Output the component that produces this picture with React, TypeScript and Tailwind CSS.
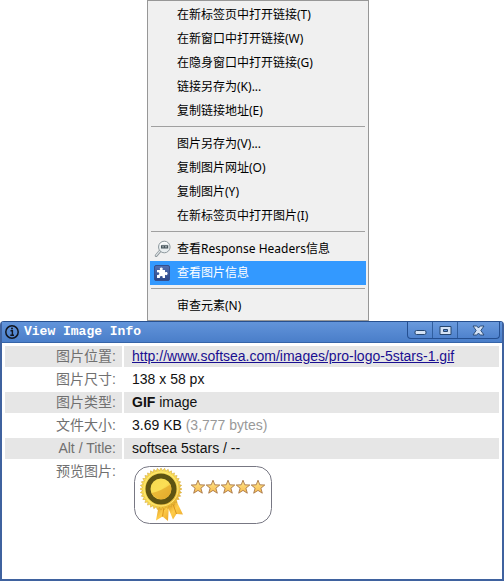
import type { ReactNode } from "react";
import clsx from "clsx";

type MenuEntry = { label: string; icon?: ReactNode; active?: boolean };

const MagnifierIcon = () => (
  <svg width="18" height="18" viewBox="0 0 18 18" aria-hidden="true">
    <path d="M6.4 10.6 2.2 15.6" stroke="#8d969b" strokeWidth="2.8" strokeLinecap="round" />
    <path d="M6.2 10.6 2.2 15.3" stroke="#dfe5e7" strokeWidth="1.2" strokeLinecap="round" />
    <circle cx="10.3" cy="7" r="5.8" fill="#e9eef0" stroke="#8f9a9f" strokeWidth="1" />
    <path d="M6.2 5.2C7.4 2.8 10.6 1.8 13.2 3.4" stroke="#fff" strokeWidth="1.2" fill="none" />
    <path d="M7.6 8.6V5.8H13.6V7.8H7.8M10.4 5.8V7.8" stroke="#47555c" strokeWidth="1.2" fill="none" />
  </svg>
);

const PuzzleIcon = () => (
  <svg width="16" height="16" viewBox="0 0 16 16" aria-hidden="true">
    <defs>
      <linearGradient id="puzzle" x2="0" y2="1">
        <stop stopColor="#5371b4" />
        <stop offset="1" stopColor="#2b4687" />
      </linearGradient>
    </defs>
    <rect x=".5" y=".5" width="15" height="15" rx="1.5" fill="url(#puzzle)" stroke="#34508f" />
    <path
      d="M3 5H6.2C5.3 3.6 6 2.5 7.3 2.5S9.3 3.6 8.4 5H11V7.5C12.4 6.6 13.6 7.2 13.6 8.6S12.4 10.6 11 9.7V13H8.5C9.2 11.7 8.5 10.9 7.3 10.9S5.4 11.7 6.1 13H3V9.8C4.4 10.5 5.3 9.8 5.3 8.6S4.4 6.8 3 7.5Z"
      fill="#fff"
    />
  </svg>
);

const groups: MenuEntry[][] = [
  [
    { label: "在新标签页中打开链接(T)" },
    { label: "在新窗口中打开链接(W)" },
    { label: "在隐身窗口中打开链接(G)" },
    { label: "链接另存为(K)..." },
    { label: "复制链接地址(E)" },
  ],
  [
    { label: "图片另存为(V)..." },
    { label: "复制图片网址(O)" },
    { label: "复制图片(Y)" },
    { label: "在新标签页中打开图片(I)" },
  ],
  [
    { label: "查看Response Headers信息", icon: <MagnifierIcon /> },
    { label: "查看图片信息", icon: <PuzzleIcon />, active: true },
  ],
  [{ label: "审查元素(N)" }],
];

const ContextMenu = () => (
  <nav className="w-[222px] border border-[#979797] bg-[#f0f0f0] p-0.5 text-xs text-black font-['Noto_Sans','Noto_Sans_CJK_SC',sans-serif]">
    {groups.map((items, i) => (
      <div key={i}>
        {i > 0 && <hr className="mx-px mt-[3px] mb-[5px] border-[#a0a0a0]" />}
        <ul>
          {items.map(({ label, icon, active }) => (
            <li key={label}>
              <button
                type="button"
                className={clsx(
                  "flex h-6 w-full items-center whitespace-nowrap text-left",
                  active && "bg-[#3399ff] text-white"
                )}
              >
                <span className="flex w-[27px] shrink-0 pl-1">{icon}</span>
                {label}
              </button>
            </li>
          ))}
        </ul>
      </div>
    ))}
  </nav>
);

// toothed edge of the medal, 36 teeth
const medalEdge = Array.from({ length: 72 }, (_, i) => {
  const r = i % 2 ? 18.4 : 21;
  const a = (i * Math.PI) / 36;
  return `${27 + r * Math.cos(a)},${23 + r * Math.sin(a)}`;
}).join(" ");

const Preview = () => (
  <svg width="138" height="58" viewBox="0 0 138 58" role="img" aria-label="softsea 5stars">
    <defs>
      <linearGradient id="gold" x1="0" y1="0" x2="1" y2="1">
        <stop stopColor="#f5d84e" />
        <stop offset=".5" stopColor="#fbdf55" />
        <stop offset="1" stopColor="#e0a020" />
      </linearGradient>
      <linearGradient id="ribbon" x2="1" y2="1">
        <stop stopColor="#d08a14" />
        <stop offset=".5" stopColor="#ffcd4a" />
        <stop offset="1" stopColor="#eaa52a" />
      </linearGradient>
      <linearGradient id="star" x2="0" y2="1">
        <stop stopColor="#ffe890" />
        <stop offset="1" stopColor="#f8bb4c" />
      </linearGradient>
    </defs>
    <rect x=".5" y=".5" width="137" height="57" rx="15" fill="#fff" stroke="#777783" />
    <path d="M25 38 22 54.5 28.5 50.5 34 55 35 38Z" fill="url(#ribbon)" />
    <path d="M33 39 39 53.5 42.5 48 49 48.5 42 34Z" fill="url(#ribbon)" />
    <path d="M30 41 28.5 50.5M39 38 42.5 48" stroke="#d9951c" />
    <polygon points={medalEdge} fill="url(#gold)" stroke="#d0a02c" strokeWidth=".5" />
    <circle cx="27" cy="23" r="17" fill="none" stroke="#ffe878" strokeWidth="1" />
    <circle cx="27" cy="23" r="13" fill="url(#gold)" stroke="#5e5312" strokeWidth="5" />
    <path d="M17.5 27C24 26 31 22 36.5 18.5A10.3 10.3 0 0 1 17.5 27Z" fill="#e3a82a" opacity=".7" />
    {[64, 79, 94, 109, 124].map((x) => (
      <path
        key={x}
        transform={`translate(${x} 21)`}
        d="M0-6.8 1.8-2.2 6.8-2 2.9 1.2 4.3 6.2 0 3.4-4.3 6.2-2.9 1.2-6.8-2-1.8-2.2Z"
        fill="url(#star)"
        stroke="#a8774a"
        strokeWidth=".9"
      />
    ))}
  </svg>
);

const rows: { label: string; value: ReactNode }[] = [
  {
    label: "图片位置:",
    value: (
      <a href="#image" className="text-[#1a0f91] underline">
        http://www.softsea.com/images/pro-logo-5stars-1.gif
      </a>
    ),
  },
  { label: "图片尺寸:", value: "138 x 58 px" },
  {
    label: "图片类型:",
    value: (
      <>
        <b>GIF</b> image
      </>
    ),
  },
  {
    label: "文件大小:",
    value: (
      <>
        3.69 KB <span className="text-[#999]">(3,777 bytes)</span>
      </>
    ),
  },
  { label: "Alt / Title:", value: "softsea 5stars / --" },
];

const WindowButtons = () => (
  <div className="flex h-[17px] overflow-hidden rounded-b border border-t-0 border-[#244f91] bg-linear-to-b from-[#6a9add] to-[#4f82cd]">
    <button type="button" aria-label="Minimize" className="flex w-[25px] items-center justify-center border-r border-[#315f9f]">
      <svg width="13" height="13" viewBox="0 0 13 13">
        <rect x="1" y="6.5" width="11" height="4" rx="1.5" fill="#d5e3f6" stroke="#26466f" />
      </svg>
    </button>
    <button type="button" aria-label="Maximize" className="flex w-[25px] items-center justify-center border-r border-[#315f9f]">
      <svg width="13" height="13" viewBox="0 0 13 13">
        <path d="M1 2.5H12V10.5H1ZM4.5 5.5V7.5H8.5V5.5Z" fill="#d5e3f6" fillRule="evenodd" stroke="#26466f" />
      </svg>
    </button>
    <button type="button" aria-label="Close" className="flex w-[41px] items-center justify-center">
      <svg width="13" height="13" viewBox="0 0 13 13">
        <path
          d="M1 2H4.8L6.5 4 8.2 2H12L8.8 6.5 12 11H8.2L6.5 9 4.8 11H1L4.2 6.5Z"
          fill="#d5e3f6"
          stroke="#26466f"
          strokeWidth=".9"
        />
      </svg>
    </button>
  </div>
);

const ImageInfo = () => (
  <section className="flex w-full flex-1 flex-col rounded-t border-2 border-t border-[#3f629f] border-t-[#27508f] bg-white">
    <header className="flex h-[21px] items-start justify-between border-b border-[#3564a8] bg-linear-to-b from-[#6294da] to-[#4a7ec9] px-0.5">
      <h1 className="flex h-5 items-center gap-1 text-[13px] font-bold text-white font-['Liberation_Mono',monospace]">
        <svg width="16" height="16" viewBox="0 0 16 16" aria-hidden="true">
          <circle cx="8" cy="8" r="6.2" fill="none" stroke="#10151f" strokeWidth="1.5" />
          <path d="M6.5 6.8H8.4V11M6.3 11.2H10" fill="none" stroke="#10151f" strokeWidth="1.4" />
          <circle cx="8" cy="4.6" r="1" fill="#10151f" />
        </svg>
        View Image Info
      </h1>
      <WindowButtons />
    </header>
    <div className="px-px pt-px">
      <table className="w-full border-separate border-spacing-0.5 text-sm leading-[21px] text-[#111] font-['Liberation_Sans','Noto_Sans_CJK_SC',sans-serif]">
        <tbody>
          {rows.map(({ label, value }) => (
            <tr key={label} className="odd:bg-[#e6e6e6]">
              <th scope="row" className="h-[21px] w-[117px] pr-1.5 text-right font-normal text-[#707070]">
                {label}
              </th>
              <td className="pl-2">{value}</td>
            </tr>
          ))}
          <tr className="align-top">
            <th scope="row" className="pr-1.5 text-right font-normal text-[#707070]">
              预览图片:
            </th>
            <td className="pt-[5px] pl-2.5">
              <Preview />
            </td>
          </tr>
        </tbody>
      </table>
    </div>
  </section>
);

export default function App() {
  return (
    <main className="flex min-h-screen flex-col items-center bg-white">
      <div className="pl-3">
        <ContextMenu />
      </div>
      <ImageInfo />
    </main>
  );
}
